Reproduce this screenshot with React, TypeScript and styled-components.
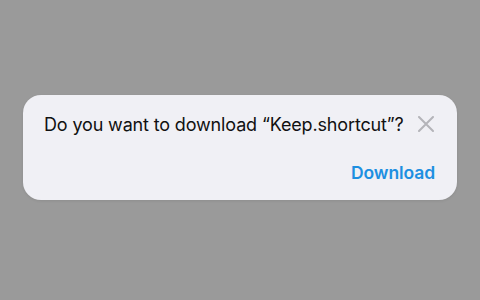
import React from "react";
import styled, { createGlobalStyle } from "styled-components";

const Global = createGlobalStyle`
  html, body { margin: 0; padding: 0; }
  body { background: #9a9a9a; font-family: Inter, "Noto Sans", sans-serif; }
`;

const Page = styled.div`
  width: 480px;
  height: 300px;
  box-sizing: border-box;
  padding: 95px 23px 0 23px;
  background: #9a9a9a;
`;

const Card = styled.div`
  width: 434px;
  height: 105px;
  box-sizing: border-box;
  background: #f0f0f5;
  border-radius: 18px;
  padding: 14px 22px 0 21px;
  display: flex;
  flex-direction: column;
  box-shadow: 0 1px 3px rgba(0, 0, 0, 0.08);
`;

const TopRow = styled.div`
  display: flex;
  align-items: center;
  justify-content: space-between;
  height: 30px;
`;

const Message = styled.div`
  font-size: 18px;
  color: #111111;
  letter-spacing: -0.15px;
`;

const Close = styled.button`
  border: none;
  background: none;
  padding: 0;
  width: 18px;
  height: 18px;
  display: flex;
  align-items: center;
  justify-content: center;
  cursor: pointer;
`;

const BottomRow = styled.div`
  display: flex;
  justify-content: flex-end;
  margin-top: 23px;
`;

const Action = styled.button`
  border: none;
  background: none;
  padding: 0;
  font-family: Inter, "Noto Sans", sans-serif;
  font-size: 17.5px;
  font-weight: 600;
  letter-spacing: -0.1px;
  color: #1d8fe1;
  cursor: pointer;
`;

export default function App() {
  return (
    <>
      <Global />
      <Page>
        <Card>
          <TopRow>
            <Message>Do you want to download “Keep.shortcut”?</Message>
            <Close aria-label="Close">
              <svg width="16" height="16" viewBox="0 0 16 16">
                <path d="M1 1L15 15M15 1L1 15" stroke="#b4b4b9" strokeWidth="2" strokeLinecap="round" />
              </svg>
            </Close>
          </TopRow>
          <BottomRow>
            <Action>Download</Action>
          </BottomRow>
        </Card>
      </Page>
    </>
  );
}
